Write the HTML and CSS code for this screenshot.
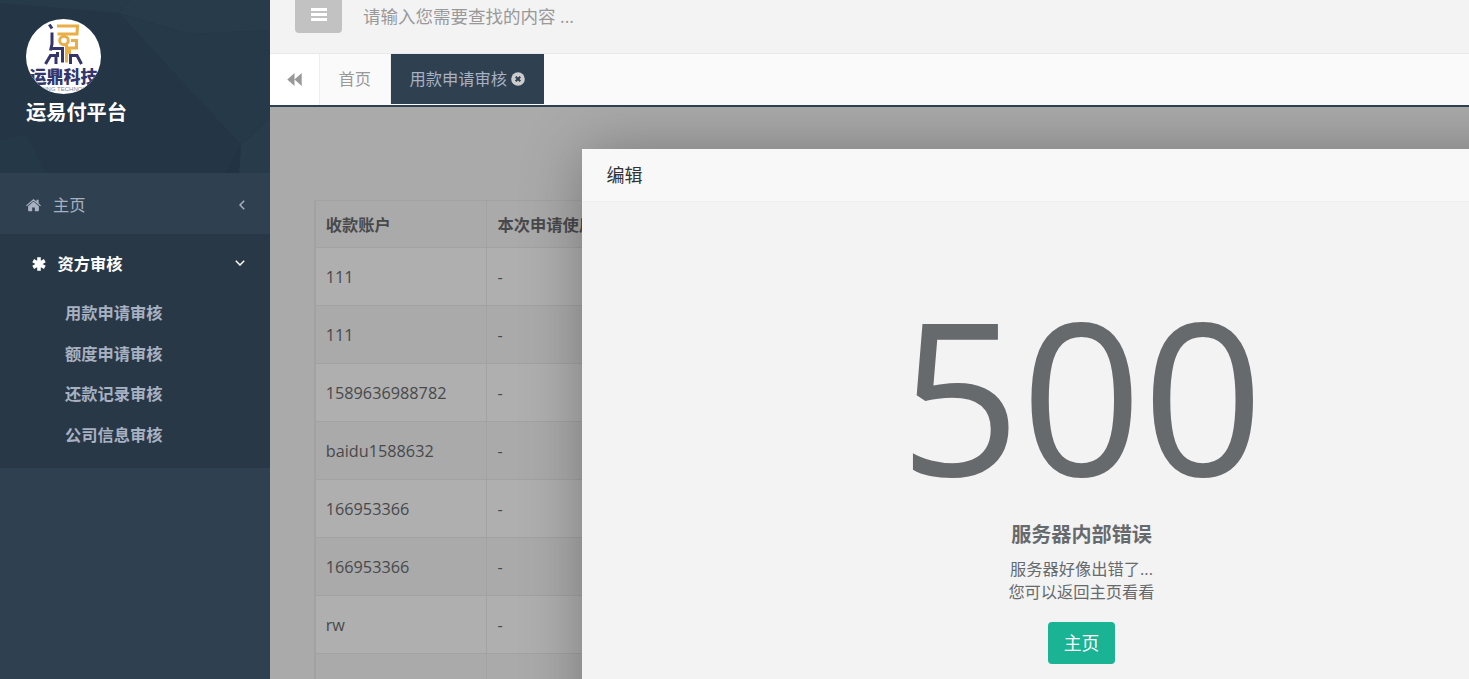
FILE: index.html
```html
<!DOCTYPE html>
<html lang="zh-CN">
<head>
<meta charset="utf-8">
<title>运易付平台</title>
<link rel="stylesheet" href="styles.css">
</head>
<body>
<div class="app">
  <aside class="sidebar">
    <header class="brand">
      <svg class="brand-bg" viewBox="0 0 270 173" preserveAspectRatio="none" aria-hidden="true">
        <path d="M0 0H130L119 13L0 3z" fill="#273a49"/>
        <path d="M130 0H270V30L190 34L119 13z" fill="#283b4a"/>
        <path d="M119 13L190 34L270 30V118L241 145z" fill="#263948"/>
        <path d="M241 145L270 118V173H239z" fill="#283b4a"/>
        <path d="M0 140L27 135L45 173H0z" fill="#253847"/>
        <path d="M241 145L239 173H225z" fill="#223443"/>
      </svg>
      <svg class="logo" viewBox="0 0 75 75" role="img" aria-label="运鼎科技">
        <defs><clipPath id="disc"><circle cx="37.5" cy="37.5" r="37.5"/></clipPath></defs>
        <g clip-path="url(#disc)">
          <rect width="75" height="75" fill="#fff"/>
          <g class="mark-gold">
            <path d="M31 7H51.500L51 15H31.500"/>
            <circle cx="38" cy="21.500" r="4.300"/>
            <path d="M45 21.500H50.500V29H43.500V35"/>
            <path d="M40.500 26V43.500"/>
          </g>
          <g class="mark-navy">
            <path d="M23.300 5.500L26 9.500"/>
            <path d="M26 13.500V25L24.500 31.500"/>
            <path d="M26 29.500H36.500V43.500"/>
            <path d="M19.500 45L24.500 36.500H30V45"/>
            <path d="M31.500 33V38"/>
            <path d="M44.500 45V36.500H51L55.500 45"/>
          </g>
          <text class="logo-name" x="37.5" y="63.500" text-anchor="middle">运鼎科技</text>
          <text class="logo-sub" x="37.5" y="71.500" text-anchor="middle">YUNDING TECHNOLOGY</text>
        </g>
      </svg>
      <strong class="brand-name">运易付平台</strong>
    </header>
    <nav>
      <a class="nav-home">
        <svg class="home-icon" viewBox="0 0 15 13"><path d="M7.500 2.600L2.100 7.200V11.500q0 .7.700.7H6.200V8.600H8.800v3.600h3.400q.7 0 .7-.7V7.200z"/><path d="M7.500 0L10.500 2.500V.8H12.600V4.300L15 6.400L14.200 7.300L7.500 1.700L.8 7.300L0 6.400z"/></svg>
        <span>主页</span>
        <svg class="caret-left" viewBox="0 0 6 10"><path d="M5.200 .8L1 5l4.200 4.200"/></svg>
      </a>
      <section class="nav-open">
        <a class="nav-parent">
          <svg class="star-icon" viewBox="0 0 14 14"><path d="M7 .3v13.400M1.200 3.650l11.600 6.700M12.800 3.650L1.200 10.350"/></svg>
          <span>资方审核</span>
          <svg class="caret-down" viewBox="0 0 10 6"><path d="M.8 .8L5 5L9.200 .8"/></svg>
        </a>
        <ul class="subnav">
          <li>用款申请审核</li>
          <li>额度申请审核</li>
          <li>还款记录审核</li>
          <li>公司信息审核</li>
        </ul>
      </section>
    </nav>
  </aside>
  <main class="main">
    <div class="topbar">
      <span class="menu-btn"><svg viewBox="0 0 16 13"><path d="M0 1.500h16M0 6.500h16M0 11.500h16"/></svg></span>
      <span class="search">请输入您需要查找的内容 ...</span>
    </div>
    <div class="tabs">
      <span class="tab-back"><svg viewBox="0 0 15 13"><path d="M7.500 0v13L.3 6.500zM14.700 0v13L7.500 6.500z"/></svg></span>
      <span class="tab">首页</span>
      <span class="tab tab-active">用款申请审核<svg viewBox="0 0 14 14"><circle cx="7" cy="7" r="6.8"/><path d="M4.700 4.700l4.600 4.600M9.300 4.700L4.700 9.300"/></svg></span>
    </div>
    <div class="content">
      <div class="table">
        <div class="row head"><span>收款账户</span><span>本次申请使用金额</span></div>
        <div class="row"><span>111</span><span>-</span></div>
        <div class="row even"><span>111</span><span>-</span></div>
        <div class="row"><span>1589636988782</span><span>-</span></div>
        <div class="row even"><span>baidu1588632</span><span>-</span></div>
        <div class="row"><span>166953366</span><span>-</span></div>
        <div class="row even"><span>166953366</span><span>-</span></div>
        <div class="row"><span>rw</span><span>-</span></div>
        <div class="row even"><span></span><span></span></div>
      </div>
      <div class="dialog">
        <div class="dialog-title">编辑</div>
        <div class="error">
          <h1>500</h1>
          <h3>服务器内部错误</h3>
          <p>服务器好像出错了...<br>您可以返回主页看看</p>
          <a class="home-btn">主页</a>
        </div>
      </div>
    </div>
  </main>
</div>
</body>
</html>
```
FILE: styles.css
```css
* { box-sizing: border-box; }
body {
  margin: 0;
  overflow: hidden;
  font: 16.25px/23px "Open Sans", "Noto Sans CJK SC", sans-serif;
  color: #676a6c;
}
.app { display: flex; width: 1469px; height: 679px; overflow: hidden; }

.sidebar { width: 270px; flex: none; background: #2f4050; color: #a7b1c2; }
.brand { position: relative; height: 173px; padding: 19px 26px; background: #243645; }
.brand-bg { position: absolute; inset: 0; width: 100%; height: 100%; }
.logo { position: relative; display: block; width: 75px; height: 75px; }
.mark-gold, .mark-navy { fill: none; stroke-width: 3; }
.mark-gold { stroke: #e9ae45; }
.mark-navy { stroke: #34356b; }
.logo-name { font: 900 17px "Noto Sans CJK SC", sans-serif; font-size: 17px; fill: #34356b; }
.logo-sub { font: 6px "Liberation Sans", sans-serif; fill: #85858f; }
.brand-name { position: relative; display: block; margin-top: 4px; font-size: 20.2px; line-height: 28px; color: #fff; }
.nav-home { display: flex; align-items: center; height: 61px; padding: 3px 25px 0 26px; }
.home-icon { width: 15px; height: 13px; margin-right: 12px; fill: #a7b1c2; }
.caret-left, .caret-down { margin-left: auto; fill: none; stroke: currentColor; stroke-width: 1.5; }
.caret-left { width: 6px; height: 10px; }
.caret-down { width: 10px; height: 6px; margin-top: -4px; }
.nav-open { height: 234px; background: #293846; font-weight: 600; }
.nav-parent { display: flex; align-items: center; height: 59px; padding: 2px 25px 0 32px; color: #fff; }
.star-icon { width: 14px; height: 14px; margin: -1px 11.5px 0 0; fill: none; stroke: #fff; stroke-width: 3.6; }
.subnav { margin: 0; padding: 0 0 0 65px; list-style: none; }
.subnav li { height: 40.6px; line-height: 41px; }

.main { flex: 1; min-width: 0; display: flex; flex-direction: column; }
.topbar { display: flex; height: 54px; flex: none; padding-left: 25px; background: #f3f3f4; border-bottom: 1px solid #e7eaec; }
.menu-btn { display: flex; justify-content: center; width: 47px; height: 33px; padding-top: 8px; background: #c2c2c2; border-radius: 0 0 4px 4px; }
.menu-btn svg { width: 16px; height: 13px; stroke: #fff; stroke-width: 3; }
.search { margin-left: 21px; font-size: 17.5px; line-height: 33px; color: #999; }
.tabs { display: flex; height: 53px; flex: none; background: #fafafa; border-bottom: 2px solid #2f4050; }
.tab-back { display: flex; align-items: center; justify-content: center; width: 50px; background: #fff; border-right: 1px solid #eee; }
.tab-back svg { width: 15px; height: 13px; fill: #999; }
.tab { display: flex; align-items: center; width: 71px; height: 50px; padding-left: 18.5px; color: #999; white-space: nowrap; border-right: 1px solid #eee; }
.tab-active { width: 153px; background: #2f4050; color: #a7b1c2; border: 0; }
.tab-active svg { flex: none; width: 14px; height: 14px; margin-left: 4px; fill: #ccc; stroke: #2f4050; stroke-width: 2; }
.tab-active svg circle { stroke: none; }

.content { position: relative; flex: 1; overflow: hidden; padding: 93px 0 0 44px; background: #aaa; }
.table { width: 1100px; border: 1px solid #a2a2a2; border-left-width: 2px; }
.row { display: flex; height: 58px; line-height: 59px; background: #afafaf; color: #48494b; border-bottom: 1px solid #a1a2a2; }
.row span { width: 171px; flex: none; padding-left: 9.700px; border-right: 1px solid #a1a2a2; white-space: nowrap; }
.row span + span { width: 240px; padding-left: 10.400px; }
.row.head { height: 47px; line-height: 49px; background: #aaa; font-weight: bold; }
.row.even { background: #aaa; }

.dialog {
  position: absolute; left: 312px; top: 42px;
  width: 998px; height: 700px;
  background: #f3f3f4; border-radius: 2px;
  box-shadow: 1px 1px 62px rgba(0, 0, 0, .3);
}
.dialog-title { height: 53px; padding-left: 24.5px; background: #f8f8f8; border-bottom: 1px solid #eee; font-size: 18px; line-height: 52px; color: #333; }
.error { display: flex; flex-direction: column; align-items: center; padding: 75px 0 0 1px; text-align: center; }
.error h1 { margin: 0; font-size: 212.5px; line-height: 234px; font-weight: 400; }
.error h3 { margin: 11px 0 10px; font-size: 20.1px; line-height: 26px; font-weight: bold; }
.error p { margin: 0; line-height: 23px; }
.home-btn { width: 67px; height: 42px; margin-top: 18px; border-radius: 4px; background: #1ab394; color: #fff; font-size: 17.8px; line-height: 42px; }
```
